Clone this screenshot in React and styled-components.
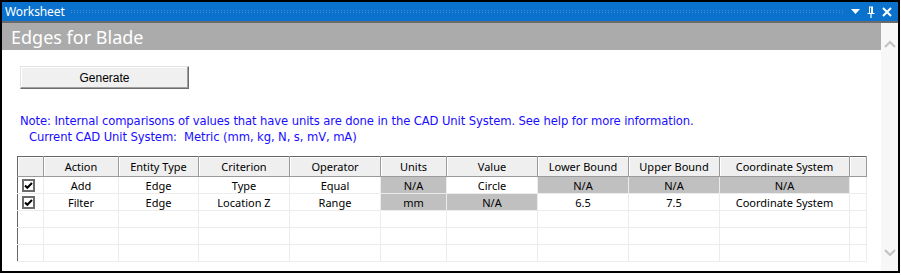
import React from 'react'
import styled, { createGlobalStyle } from 'styled-components'

const GlobalStyle = createGlobalStyle`
    html, body {
        margin: 0;
        padding: 0;
        background: #ffffff;
    }
    * {
        box-sizing: border-box;
    }
`

const Window = styled.div`
    width: 900px;
    height: 273px;
    border: 2px solid #000;
    display: flex;
    flex-direction: column;
    background: #fff;
`
const TitleBar = styled.div`
    height: 21px;
    background: #0a72cc;
    border-bottom: 2px solid #6a6a6a;
    display: flex;
    align-items: center;
    padding: 0 6px 0 3px;
    gap: 6px;
    flex-shrink: 0;
`
const TitleText = styled.span`
    color: #fff;
    font-family: "Noto Sans", sans-serif;
    font-size: 12px;
    line-height: 16px;
    letter-spacing: -0.1px;
`
const Dots = styled.div`
    flex: 1;
    height: 4px;
    background-image: radial-gradient(circle at 0.5px 0.5px, #3f8cd8 0.5px, transparent 0.6px);
    background-size: 3px 2px;
`
const TitleIcons = styled.div`
    display: flex;
    align-items: center;
    gap: 7px;
`
const Body = styled.div`
    flex: 1;
    display: flex;
    min-height: 0;
`
const Main = styled.div`
    flex: 1;
    display: flex;
    flex-direction: column;
`
const Heading = styled.div`
    height: 27px;
    background: #ababab;
    color: #fff;
    font-family: "Noto Sans", sans-serif;
    font-size: 18px;
    line-height: 28px;
    padding-left: 9px;
`
const Content = styled.div`
    flex: 1;
    padding: 16px 0 0 15px;
    display: flex;
    flex-direction: column;
`
const Button = styled.button`
    width: 169px;
    height: 23px;
    margin-left: 3px;
    background: #f0f0f0;
    border: 1px solid;
    border-color: #e3e3e3 #6d6d6d #6d6d6d #e3e3e3;
    box-shadow: inset -1px -1px 0 #a0a0a0, inset 1px 1px 0 #fff;
    font-family: "Liberation Sans", Arial, sans-serif;
    font-size: 12px;
    color: #000;
    padding: 0;
`
const Note = styled.div`
    margin-top: 24px;
    margin-left: 3px;
    color: #1a0cff;
    font-family: "DejaVu Sans", sans-serif;
    font-size: 11.6px;
    line-height: 16px;
    letter-spacing: -0.1px;
`
const NoteLine = styled.div`
    padding-left: ${p => p.indent || 0}px;
`
const Table = styled.table`
    margin-top: 11px;
    border-collapse: collapse;
    table-layout: fixed;
    width: 849px;
    border: 1px solid #666;
    font-family: "Noto Sans", sans-serif;
    font-size: 11px;
    color: #000;
`
const Th = styled.th`
    height: 20px;
    padding: 0;
    font-weight: normal;
    background: #efefef;
    border-right: 1px solid #9a9a9a;
    border-bottom: 1px solid #9a9a9a;
    box-shadow: inset 1px 1px 0 #fff;
    line-height: 17px;
    text-align: center;
`
const Td = styled.td`
    height: 17px;
    padding: 1px 0 0;
    line-height: 15px;
    text-align: center;
    white-space: nowrap;
    overflow: hidden;
    border-right: 1px solid #ececec;
    border-bottom: 1px solid #ececec;
    background: ${p => (p.disabled ? '#c0c0c0' : '#fff')};
`
const CheckCell = styled(Td)`
    text-align: left;
    padding: 0 0 0 4px;
`
const Check = styled.span`
    display: inline-block;
    width: 13px;
    height: 13px;
    border: 2px solid #6b6b6b;
    background: #fff;
    vertical-align: middle;
    margin-top: -2px;
    line-height: 0;
`
const Scrollbar = styled.div`
    width: 17px;
    background: #f7f7f7;
    display: flex;
    flex-direction: column;
    justify-content: space-between;
    align-items: center;
    padding: 17px 0 14px;
`

const widths = [26, 75, 80, 91, 91, 66, 91, 91, 91, 130, 17]
const headers = ['', 'Action', 'Entity Type', 'Criterion', 'Operator', 'Units', 'Value', 'Lower Bound', 'Upper Bound', 'Coordinate System', '']

const rows = [
    [
        { t: 'Add' }, { t: 'Edge' }, { t: 'Type' }, { t: 'Equal' },
        { t: 'N/A', off: true }, { t: 'Circle' }, { t: 'N/A', off: true },
        { t: 'N/A', off: true }, { t: 'N/A', off: true }, { t: '' },
    ],
    [
        { t: 'Filter' }, { t: 'Edge' }, { t: 'Location Z' }, { t: 'Range' },
        { t: 'mm', off: true }, { t: 'N/A', off: true }, { t: '6.5' },
        { t: '7.5' }, { t: 'Coordinate System' }, { t: '' },
    ],
]

const CheckBox = () => (
    <Check>
        <svg width="9" height="9" viewBox="0 0 9 9">
            <path d="M1 4.5 L3.3 6.8 L8 2" stroke="#000" strokeWidth="2" fill="none" />
        </svg>
    </Check>
)

const App = () => {
    return (
        <>
            <GlobalStyle />
            <Window>
                <TitleBar>
                    <TitleText>Worksheet</TitleText>
                    <Dots />
                    <TitleIcons>
                        <svg width="9" height="6" viewBox="0 0 9 6">
                            <path d="M0 0 H9 L4.5 5 Z" fill="#fff" />
                        </svg>
                        <svg width="8" height="12" viewBox="0 0 8 12">
                            <path d="M2 0.5 H6 V7 H7.5 V8 H4.6 V12 H3.4 V8 H0.5 V7 H2 Z M3 1.5 V7 H4 V1.5 Z" fill="#fff" fillRule="evenodd" />
                        </svg>
                        <svg width="10" height="10" viewBox="0 0 10 10">
                            <path d="M1 1 L9 9 M9 1 L1 9" stroke="#fff" strokeWidth="2" />
                        </svg>
                    </TitleIcons>
                </TitleBar>
                <Body>
                    <Main>
                        <Heading>Edges for Blade</Heading>
                        <Content>
                            <Button>Generate</Button>
                            <Note>
                                <NoteLine>Note: Internal comparisons of values that have units are done in the CAD Unit System. See help for more information.</NoteLine>
                                <NoteLine indent={9}>Current CAD Unit System:&nbsp; Metric (mm, kg, N, s, mV, mA)</NoteLine>
                            </Note>
                            <Table>
                                <colgroup>
                                    {widths.map((w, i) => <col key={i} style={{ width: w }} />)}
                                </colgroup>
                                <thead>
                                    <tr>
                                        {headers.map((h, i) => <Th key={i}>{h}</Th>)}
                                    </tr>
                                </thead>
                                <tbody>
                                    {rows.map((r, i) => (
                                        <tr key={i}>
                                            <CheckCell><CheckBox /></CheckCell>
                                            {r.map((c, j) => (
                                                <Td key={j} disabled={c.off}>{c.t}</Td>
                                            ))}
                                        </tr>
                                    ))}
                                    {[0, 1, 2].map(i => (
                                        <tr key={'e' + i}>
                                            {widths.map((w, j) => <Td key={j} />)}
                                        </tr>
                                    ))}
                                </tbody>
                            </Table>
                        </Content>
                    </Main>
                    <Scrollbar>
                        <svg width="12" height="8" viewBox="0 0 12 8">
                            <path d="M1 7 L6 2 L11 7" stroke="#c2c2c2" strokeWidth="2" fill="none" />
                        </svg>
                        <svg width="12" height="8" viewBox="0 0 12 8">
                            <path d="M1 1 L6 6 L11 1" stroke="#c2c2c2" strokeWidth="2" fill="none" />
                        </svg>
                    </Scrollbar>
                </Body>
            </Window>
        </>
    )
}

export default App
